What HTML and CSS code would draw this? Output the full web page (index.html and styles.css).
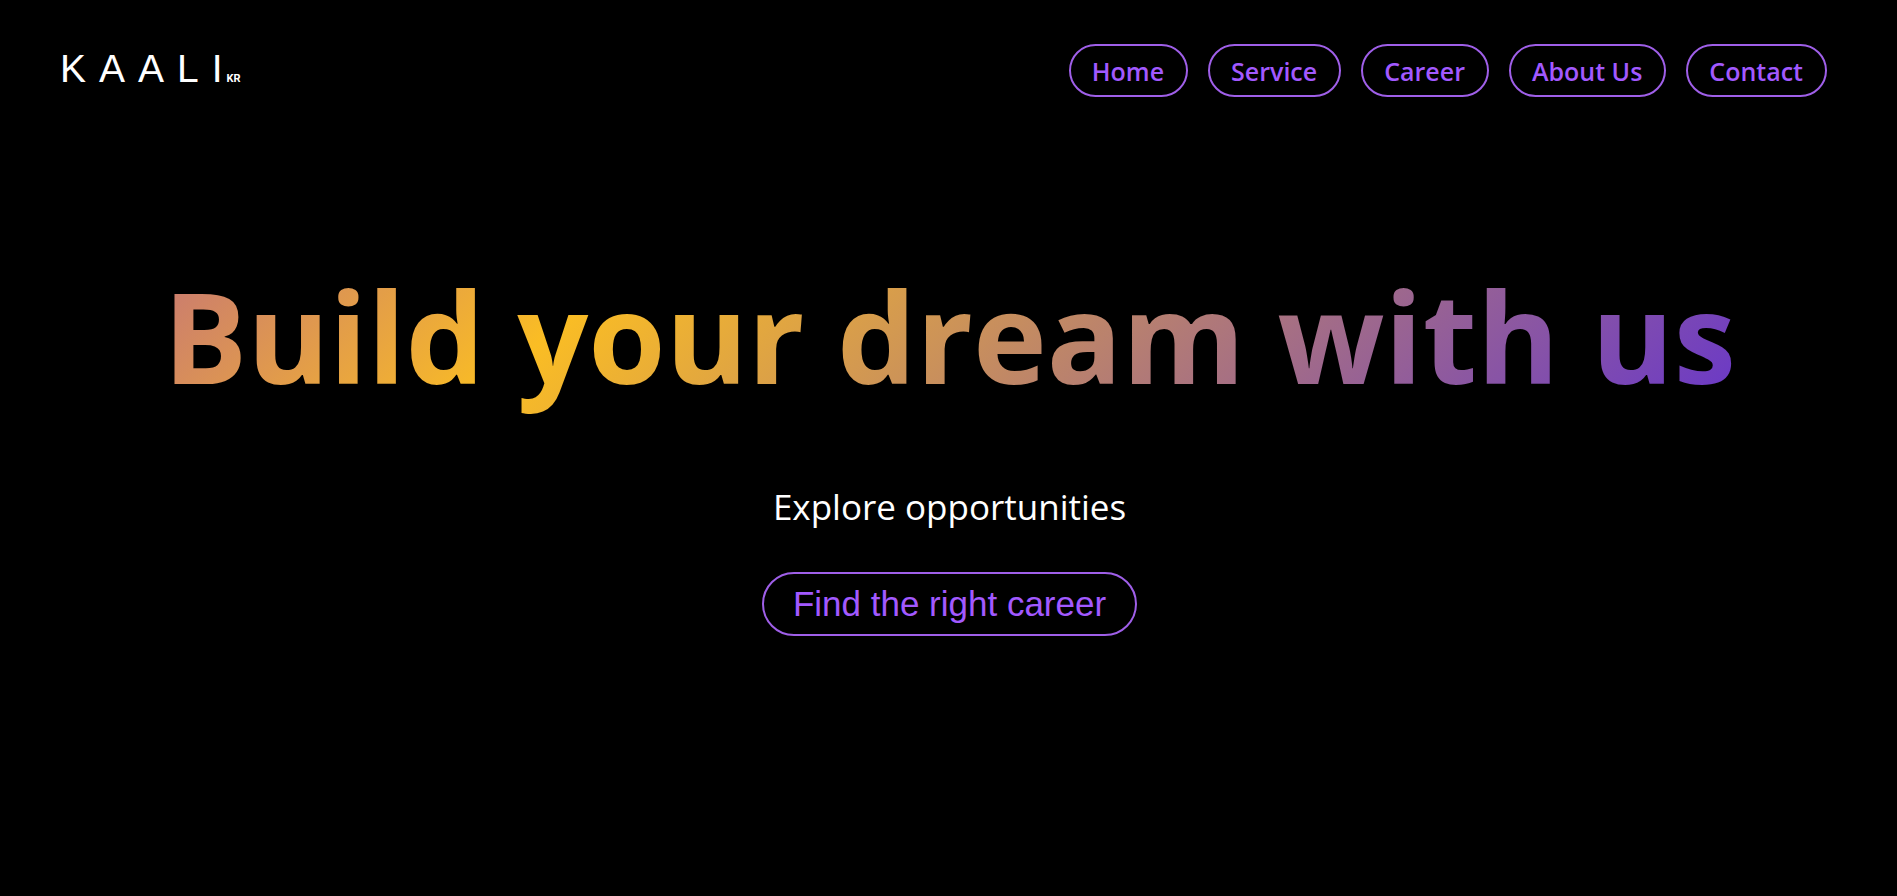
FILE: index.html
```html
<!DOCTYPE html>
<html lang="en">
<head>
<meta charset="utf-8">
<title>KAALI KR</title>
<link rel="stylesheet" href="styles.css">
</head>
<body>
<header class="header">
  <a class="logo" href="#"><span class="logo-name">KAAL<span class="logo-last">I</span></span><span class="logo-suffix">KR</span></a>
  <nav class="nav">
    <a class="nav-link" href="#">Home</a>
    <a class="nav-link" href="#">Service</a>
    <a class="nav-link" href="#">Career</a>
    <a class="nav-link" href="#">About Us</a>
    <a class="nav-link" href="#">Contact</a>
  </nav>
</header>
<main class="hero">
  <h1 class="hero-title">Build your dream with us</h1>
  <p class="hero-text">Explore opportunities</p>
  <button class="hero-button" type="button">Find the right career</button>
</main>
</body>
</html>
```
FILE: styles.css
```css
* {
  box-sizing: border-box;
}

body {
  margin: 0;
  background: #000;
  color: #fff;
  font-family: "Open Sans", "Noto Sans", sans-serif;
}

.header {
  display: flex;
  align-items: flex-start;
  justify-content: space-between;
  padding: 44px 70px 0 60px;
}

.logo {
  display: flex;
  align-items: baseline;
  color: #fff;
  font-family: "Liberation Sans", Arial, sans-serif;
  text-decoration: none;
}

.logo-name {
  font-size: 39px;
  line-height: 50px;
  letter-spacing: 13px;
}

.logo-last {
  letter-spacing: 0;
}

.logo-suffix {
  margin-left: 4px;
  font-family: Roboto, sans-serif;
  font-size: 11px;
  font-weight: 700;
}

.nav {
  display: flex;
  gap: 20px;
}

.nav-link {
  padding: 8px 22px 7px 21px;
  border: 2px solid #9f5fe8;
  border-radius: 27px;
  color: #a259ff;
  font-size: 25px;
  font-weight: 600;
  line-height: 34px;
  text-decoration: none;
}

.hero {
  display: flex;
  flex-direction: column;
  align-items: center;
  padding: 149px 0 0 2px;
}

.hero-title {
  margin: 0;
  background: linear-gradient(135deg, #c67676, #fabd24 27%, #6d3bc4 97%);
  background-clip: text;
  -webkit-background-clip: text;
  color: transparent;
  font-size: 125px;
  font-weight: 700;
  line-height: 180px;
}

.hero-text {
  margin: 56px 0 41px;
  font-size: 35px;
  line-height: 49px;
}

.hero-button {
  padding: 9px 29px;
  border: 2px solid #9f5fe8;
  border-radius: 32px;
  background: transparent;
  color: #a259ff;
  font-family: "Liberation Sans", Arial, sans-serif;
  font-size: 35px;
  line-height: 42px;
}
```
